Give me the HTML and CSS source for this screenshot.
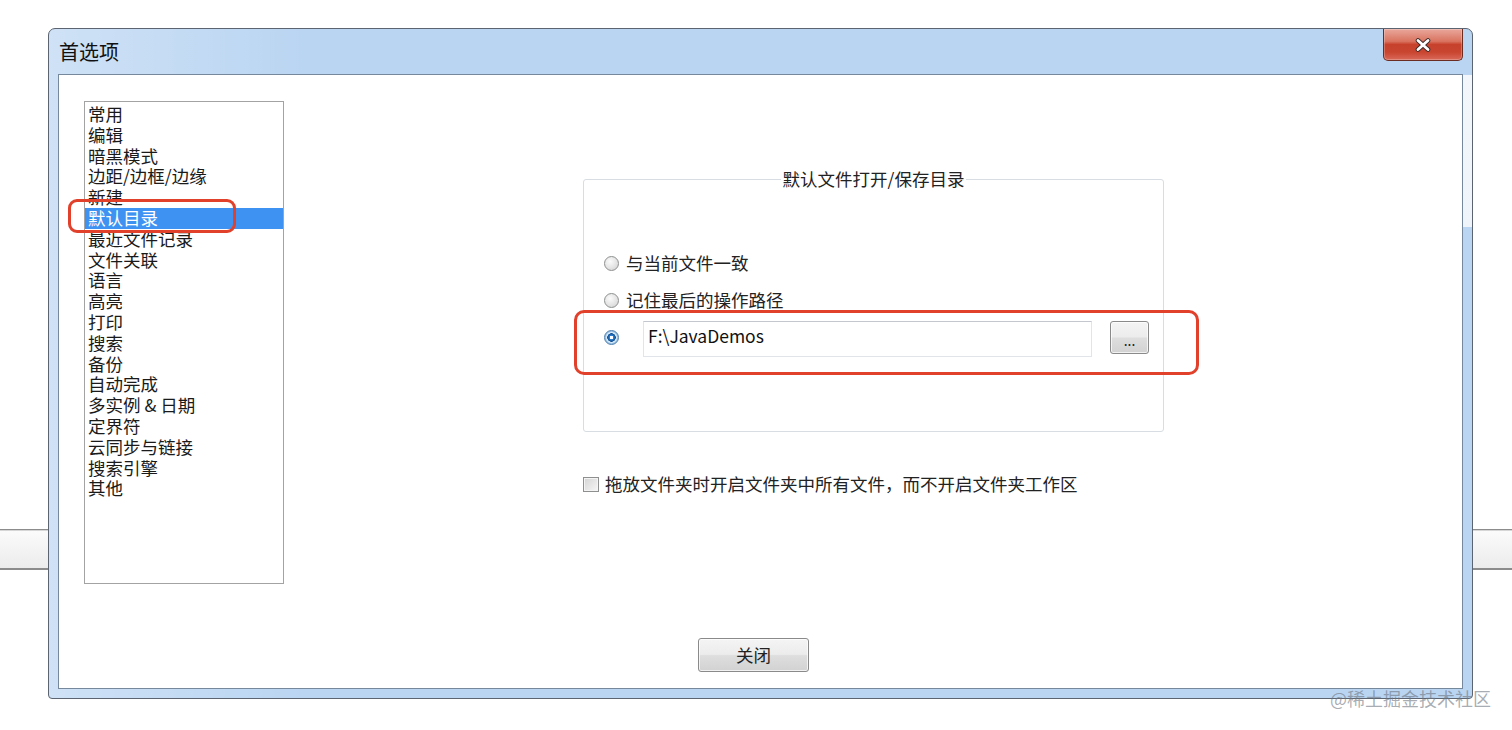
FILE: index.html
```html
<!DOCTYPE html>
<html lang="zh-CN">
<head>
    <meta charset="UTF-8" />
    <meta name="viewport" content="width=device-width, initial-scale=1.0"/>
    <title>首选项</title>
    <link rel="stylesheet" href="styles.css">
</head>
<body>

<!-- Window lying behind the dialog -->
<div class="desk-bar"></div>

<div class="window">

    <!-- Title bar -->
    <div class="titlebar">
        <span class="title">首选项</span>
        <button class="close-btn" aria-label="关闭">
            <svg width="18" height="14" viewBox="0 0 18 14">
                <path d="M4 2.5 L14 11.5 M14 2.5 L4 11.5" stroke="#3b2b29" stroke-width="4.6" stroke-linecap="round"/>
                <path d="M4 2.5 L14 11.5 M14 2.5 L4 11.5" stroke="#ffffff" stroke-width="2.8" stroke-linecap="round"/>
            </svg>
        </button>
    </div>

    <div class="client">
        <div class="main">

            <!-- Category list -->
            <ul class="category-list">
                <li>常用</li>
                <li>编辑</li>
                <li>暗黑模式</li>
                <li>边距/边框/边缘</li>
                <li>新建</li>
                <li class="selected">默认目录</li>
                <li>最近文件记录</li>
                <li>文件关联</li>
                <li>语言</li>
                <li>高亮</li>
                <li>打印</li>
                <li>搜索</li>
                <li>备份</li>
                <li>自动完成</li>
                <li>多实例 &amp; 日期</li>
                <li>定界符</li>
                <li>云同步与链接</li>
                <li>搜索引擎</li>
                <li>其他</li>
            </ul>

            <!-- Settings panel -->
            <div class="settings">
                <fieldset class="group">
                    <legend>默认文件打开/保存目录</legend>
                    <div class="option first"><span class="radio"></span>与当前文件一致</div>
                    <div class="option second"><span class="radio"></span>记住最后的操作路径</div>
                    <div class="path-row">
                        <span class="radio checked"></span>
                        <div class="path-input">F:\JavaDemos</div>
                        <button class="btn browse-btn">...</button>
                    </div>
                </fieldset>

                <div class="check-row"><span class="checkbox"></span>拖放文件夹时开启文件夹中所有文件，而不开启文件夹工作区</div>
            </div>
        </div>

        <div class="footer">
            <button class="btn close-dialog">关闭</button>
        </div>
    </div>
</div>

<!-- Red annotation marks -->
<div class="mark mark-list"></div>
<div class="mark mark-path"></div>

<div class="watermark">@稀土掘金技术社区</div>

</body>
</html>
```

FILE: styles.css
```css
* {
  box-sizing: border-box;
  margin: 0;
  padding: 0;
}

body {
  position: relative;
  width: 1512px;
  height: 730px;
  overflow: hidden;
  background: #ffffff;
  font-family: "Noto Sans CJK SC", "Liberation Sans", sans-serif;
  color: #1a1a1a;
}

.desk-bar {
  position: absolute;
  left: 0;
  right: 0;
  top: 529px;
  height: 41px;
  border-top: 1px solid #8c8c8c;
  border-bottom: 2px solid #8c8c8c;
  background: linear-gradient(#fbfbfb, #ececec);
  box-shadow: inset 0 1px 0 #d6d6d6;
}

/* Dialog window */
.window {
  position: absolute;
  left: 48px;
  top: 28px;
  width: 1425px;
  height: 671px;
  border: 1px solid #5b6470;
  border-radius: 7px 7px 4px 4px;
  padding: 0 9px 9px;
  background:
    linear-gradient(#f3f7fb, #eef4fa) right 0 top 46px / 9px 152px no-repeat,
    linear-gradient(to right, rgba(255,255,255,0.3), rgba(255,255,255,0) 18%),
    #bad5f2;
}

.titlebar {
  position: relative;
  height: 45px;
  display: flex;
  align-items: center;
  padding-left: 1px;
}

.title {
  font-size: 20px;
  line-height: 24px;
  color: #111;
}

.close-btn {
  position: absolute;
  top: 0;
  right: 0;
  width: 80px;
  height: 32px;
  border: 1px solid #6b2c22;
  border-top: none;
  border-radius: 0 0 5px 5px;
  background: linear-gradient(#e9a89c 0%, #d9735f 40%, #c7412b 50%, #c9452f 75%, #d9695a 100%);
  box-shadow: inset 0 0 0 1px rgba(255,255,255,0.25);
  display: flex;
  align-items: center;
  justify-content: center;
}

.client {
  height: 615px;
  border: 1px solid #76889c;
  background: #ffffff;
  padding: 26px 0 0 25px;
}

.main {
  display: flex;
  align-items: flex-start;
}

/* Category list */
.category-list {
  list-style: none;
  width: 200px;
  height: 483px;
  border: 1px solid #a3a3a3;
  padding-top: 2px;
  font-size: 17.5px;
  line-height: 20.8px;
}

.category-list li {
  padding-left: 3px;
  white-space: nowrap;
}

.category-list li.selected {
  background: #3d92f2;
  color: #ffffff;
}

/* Settings panel */
.settings {
  margin-left: 299px;
  padding-top: 68px;
  font-size: 17.5px;
  line-height: 20px;
}

.group {
  width: 581px;
  height: 263px;
  border: 1px solid #d7dde3;
  border-radius: 3px;
  padding: 0;
}

.group legend {
  margin: 0 auto;
  padding: 0 2px;
  color: #222;
  font-size: 17.5px;
  line-height: 20px;
}

.option {
  display: flex;
  align-items: center;
  height: 20px;
  gap: 7px;
  margin-left: 20px;
  color: #222;
}

.option.first {
  margin-top: 64px;
}

.option.second {
  margin-top: 17px;
}

.radio {
  width: 15px;
  height: 15px;
  border-radius: 50%;
  border: 1px solid #8e8f8f;
  background: radial-gradient(circle at 40% 35%, #fbfbfb 0%, #e4e4e4 55%, #cfcfcf 100%);
  flex-shrink: 0;
}

.radio.checked {
  background:
    radial-gradient(circle at 50% 50%, #ffffff 0 1.5px, #2d7fd0 2px, #0f4f92 4px, rgba(0,0,0,0) 4.5px),
    radial-gradient(circle at 50% 50%, #d8e9f8 0 5px, #9fc4e6 6px);
  border-color: #4e7fae;
}

.path-row {
  display: flex;
  align-items: flex-start;
  margin: 11px 0 0 20px;
}

.path-row .radio {
  margin-top: 9px;
}

.path-input {
  width: 449px;
  height: 36px;
  margin-left: 24px;
  border: 1px solid #e1e5ea;
  border-top-color: #c4c8ce;
  padding: 4px 4px 0;
  font-size: 17.5px;
  line-height: 20px;
  color: #111;
}

.btn {
  font-family: "Noto Sans CJK SC", "Liberation Sans", sans-serif;
  color: #222;
  border: 1px solid #8a8a8a;
  border-radius: 3px;
  background: linear-gradient(#f4f4f4 0%, #ececec 48%, #dedede 52%, #d2d2d2 100%);
  box-shadow: inset 0 0 0 1px rgba(255,255,255,0.7);
}

.browse-btn {
  width: 39px;
  height: 33px;
  margin-left: 18px;
  font-size: 14px;
  line-height: 14px;
  padding-top: 4px;
}

.check-row {
  display: flex;
  align-items: center;
  gap: 6px;
  height: 20px;
  margin-top: 42px;
  color: #222;
}

.checkbox {
  width: 16px;
  height: 15px;
  border: 1px solid #8e8f8f;
  background: linear-gradient(135deg, #d4d4d4, #f6f6f6);
  box-shadow: inset 0 0 0 1px #f4f4f4;
}

.footer {
  display: flex;
  justify-content: center;
  margin-top: 54px;
  padding-right: 39px;
}

.close-dialog {
  width: 111px;
  height: 34px;
  font-size: 17.5px;
  line-height: 20px;
}

/* Annotations */
.mark {
  position: absolute;
  border: 3px solid #e1412b;
  border-radius: 9px;
}

.mark-list {
  left: 68px;
  top: 199px;
  width: 168px;
  height: 34px;
}

.mark-path {
  left: 574px;
  top: 310px;
  width: 625px;
  height: 65px;
  border-radius: 10px;
}

.watermark {
  position: absolute;
  left: 1330px;
  top: 686px;
  font-size: 18px;
  line-height: 24px;
  color: rgba(110, 118, 128, 0.6);
  white-space: nowrap;
}
```
